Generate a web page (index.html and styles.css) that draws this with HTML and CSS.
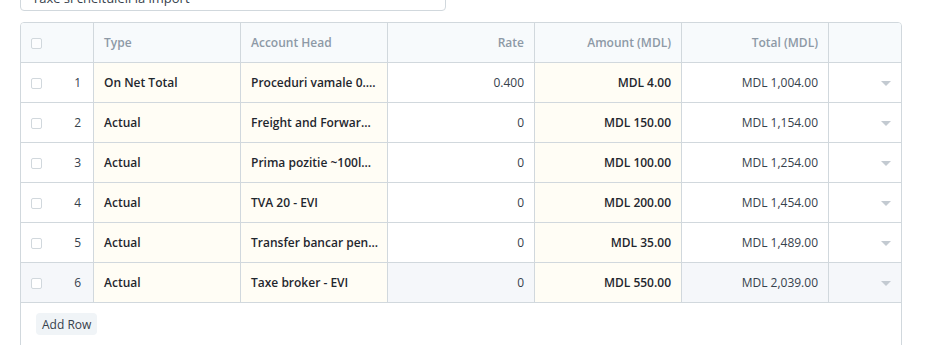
FILE: index.html
```html
<!DOCTYPE html>
<html>
<head>
<meta charset="utf-8">
<link rel="stylesheet" href="styles.css">
</head>
<body>
<div class="page">
  <div class="field-input">Taxe si cheltuieli la import</div>
  <div class="form-grid">
    <div class="grid-row grid-head">
      <div class="col col-idx"><span class="check"></span></div>
      <div class="col">Type</div>
      <div class="col">Account Head</div>
      <div class="col right">Rate</div>
      <div class="col right">Amount (MDL)</div>
      <div class="col right">Total (MDL)</div>
      <div class="col col-last"></div>
    </div>

    <div class="grid-row">
      <div class="col col-idx"><span class="check"></span><span class="idx">1</span></div>
      <div class="col ro bold">On Net Total</div>
      <div class="col ro bold">Proceduri vamale 0....</div>
      <div class="col right">0.400</div>
      <div class="col ro bold right">MDL 4.00</div>
      <div class="col right">MDL 1,004.00</div>
      <div class="col col-last"><span class="caret"></span></div>
    </div>

    <div class="grid-row">
      <div class="col col-idx"><span class="check"></span><span class="idx">2</span></div>
      <div class="col ro bold">Actual</div>
      <div class="col ro bold">Freight and Forwar...</div>
      <div class="col right">0</div>
      <div class="col ro bold right">MDL 150.00</div>
      <div class="col right">MDL 1,154.00</div>
      <div class="col col-last"><span class="caret"></span></div>
    </div>

    <div class="grid-row">
      <div class="col col-idx"><span class="check"></span><span class="idx">3</span></div>
      <div class="col ro bold">Actual</div>
      <div class="col ro bold">Prima pozitie ~100l...</div>
      <div class="col right">0</div>
      <div class="col ro bold right">MDL 100.00</div>
      <div class="col right">MDL 1,254.00</div>
      <div class="col col-last"><span class="caret"></span></div>
    </div>

    <div class="grid-row">
      <div class="col col-idx"><span class="check"></span><span class="idx">4</span></div>
      <div class="col ro bold">Actual</div>
      <div class="col ro bold">TVA 20 - EVI</div>
      <div class="col right">0</div>
      <div class="col ro bold right">MDL 200.00</div>
      <div class="col right">MDL 1,454.00</div>
      <div class="col col-last"><span class="caret"></span></div>
    </div>

    <div class="grid-row">
      <div class="col col-idx"><span class="check"></span><span class="idx">5</span></div>
      <div class="col ro bold">Actual</div>
      <div class="col ro bold">Transfer bancar pen...</div>
      <div class="col right">0</div>
      <div class="col ro bold right">MDL 35.00</div>
      <div class="col right">MDL 1,489.00</div>
      <div class="col col-last"><span class="caret"></span></div>
    </div>

    <div class="grid-row hover">
      <div class="col col-idx"><span class="check"></span><span class="idx">6</span></div>
      <div class="col ro bold">Actual</div>
      <div class="col ro bold">Taxe broker - EVI</div>
      <div class="col right">0</div>
      <div class="col ro bold right">MDL 550.00</div>
      <div class="col right">MDL 2,039.00</div>
      <div class="col col-last"><span class="caret"></span></div>
    </div>

    <div class="grid-footer">
      <button class="btn">Add Row</button>
    </div>
  </div>
</div>
</body>
</html>
```

FILE: styles.css
```css
html, body {
  margin: 0;
  padding: 0;
  overflow: hidden;
  background: #ffffff;
}

body {
  font-family: "Open Sans", "Noto Sans", sans-serif;
  font-size: 12px;
  color: #36414c;
}

.page {
  padding: 0 24px 0 20px;
}

.field-input {
  box-sizing: border-box;
  width: 426px;
  height: 28px;
  margin-top: -17px;
  border: 1px solid #d1d8dd;
  border-radius: 4px;
  padding: 0 11px 4px;
  display: flex;
  align-items: flex-end;
  font-size: 13px;
  line-height: 16px;
  color: #36414c;
}

.form-grid {
  margin-top: 11px;
  border: 1px solid #d1d8dd;
  border-radius: 4px;
  overflow: hidden;
}

.grid-row {
  display: grid;
  grid-template-columns: 73px 147px 147px 147px 147px 147px 1fr;
  height: 40px;
  box-sizing: border-box;
  border-bottom: 1px solid #d1d8dd;
}

.grid-head {
  background: #f7fafc;
  color: #8d99a6;
  font-weight: 600;
}

.grid-row.hover {
  background: #f5f7fa;
}

.col {
  box-sizing: border-box;
  border-right: 1px solid #d1d8dd;
  padding: 0 10px;
  display: flex;
  align-items: center;
  white-space: nowrap;
  overflow: hidden;
}

.col.right {
  justify-content: flex-end;
}

.col.ro {
  background: #fffdf5;
}

.col.bold {
  font-weight: 600;
  color: #1f272e;
}

.col-last {
  border-right: none;
  justify-content: flex-end;
}

.col-idx {
  justify-content: space-between;
  padding: 0 12px 0 10px;
}

.check {
  box-sizing: border-box;
  width: 11px;
  height: 11px;
  border: 1px solid #d1d8dd;
  border-radius: 2px;
  background: #ffffff;
  margin-top: 2px;
}

.grid-head .check {
  background: #fcfdfe;
}

.idx {
  color: #36414c;
}

.caret {
  width: 0;
  height: 0;
  border-left: 5px solid transparent;
  border-right: 5px solid transparent;
  border-top: 5px solid #c3cad1;
  margin-top: 2px;
}

.grid-footer {
  padding: 10px 15px 16px;
}

.btn {
  font-family: inherit;
  font-size: 12px;
  color: #36414c;
  background: #f0f4f7;
  border: none;
  border-radius: 4px;
  height: 22px;
  padding: 0 6px;
  margin: 0;
  display: block;
}
```
